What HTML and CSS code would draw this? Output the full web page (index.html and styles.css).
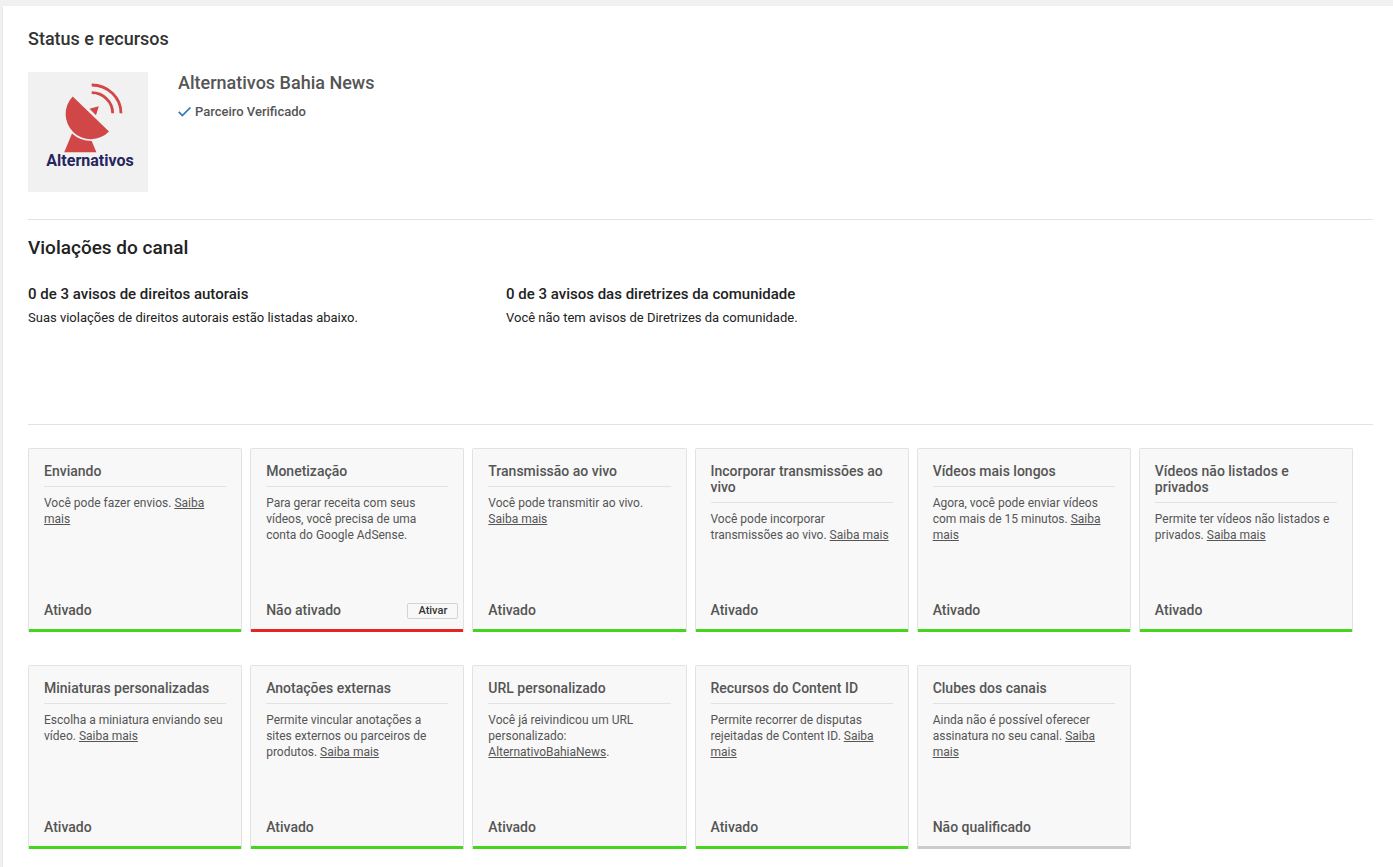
FILE: index.html
```html
<!DOCTYPE html>
<html lang="pt-BR">
<head>
<meta charset="utf-8">
<meta name="viewport" content="width=device-width, initial-scale=1">
<title>Status e recursos</title>
<link rel="stylesheet" href="styles.css">
</head>
<body>
<main class="panel">
  <h1 class="page-title">Status e recursos</h1>

  <section class="channel">
    <svg class="avatar" viewBox="0 0 120 120" role="img" aria-label="Logotipo Alternativos">
      <rect width="120" height="120" fill="#f1f1f1"/>
      <g fill="#d14646">
        <path d="M44.7 24.5 81 59.5A25.2 25.2 0 0 1 44.7 24.5Z"/>
        <path d="M61.5 36.7 70.8 34.2 68 43.2Z"/>
        <path d="M44 61.5Q52 69 63.7 69L68.4 80.3H36.2Z"/>
      </g>
      <g fill="none" stroke="#d14646" stroke-width="2.8">
        <path d="M63.7 13A29.3 28.3 0 0 1 93 41.3"/>
        <path d="M63.7 20.7A21 20.6 0 0 1 84.7 41.3"/>
      </g>
      <text class="avatar-text" x="62" y="94" text-anchor="middle">Alternativos</text>
    </svg>
    <div class="channel-info">
      <h2 class="channel-name">Alternativos Bahia News</h2>
      <p class="verified">
        <svg class="check" viewBox="0 0 13 10" aria-hidden="true"><path d="M.7 4.8 4.4 8.5 12.4 .5" fill="none" stroke="#2f78b9" stroke-width="1.7"/></svg>
        Parceiro Verificado
      </p>
    </div>
  </section>

  <section class="violations">
    <h2 class="section-title">Violações do canal</h2>
    <div class="strikes">
      <div class="strike">
        <h3 class="strike-title">0 de 3 avisos de direitos autorais</h3>
        <p class="strike-text">Suas violações de direitos autorais estão listadas abaixo.</p>
      </div>
      <div class="strike">
        <h3 class="strike-title">0 de 3 avisos das diretrizes da comunidade</h3>
        <p class="strike-text">Você não tem avisos de Diretrizes da comunidade.</p>
      </div>
    </div>
  </section>

  <section class="features">
    <article class="card">
      <h3 class="card-title">Enviando</h3>
      <p class="card-text">Você pode fazer envios. <a href="#">Saiba mais</a></p>
      <div class="card-status">Ativado</div>
    </article>
    <article class="card card-off">
      <h3 class="card-title">Monetização</h3>
      <p class="card-text">Para gerar receita com seus vídeos, você precisa de uma conta do Google AdSense.</p>
      <div class="card-status">Não ativado <button class="activate" type="button">Ativar</button></div>
    </article>
    <article class="card">
      <h3 class="card-title">Transmissão ao vivo</h3>
      <p class="card-text">Você pode transmitir ao vivo. <a href="#">Saiba mais</a></p>
      <div class="card-status">Ativado</div>
    </article>
    <article class="card">
      <h3 class="card-title">Incorporar transmissões ao vivo</h3>
      <p class="card-text">Você pode incorporar transmissões ao vivo. <a href="#">Saiba mais</a></p>
      <div class="card-status">Ativado</div>
    </article>
    <article class="card">
      <h3 class="card-title">Vídeos mais longos</h3>
      <p class="card-text">Agora, você pode enviar vídeos com mais de 15 minutos. <a href="#">Saiba mais</a></p>
      <div class="card-status">Ativado</div>
    </article>
    <article class="card">
      <h3 class="card-title">Vídeos não listados e privados</h3>
      <p class="card-text">Permite ter vídeos não listados e privados. <a href="#">Saiba mais</a></p>
      <div class="card-status">Ativado</div>
    </article>
    <article class="card">
      <h3 class="card-title">Miniaturas personalizadas</h3>
      <p class="card-text">Escolha a miniatura enviando seu vídeo. <a href="#">Saiba mais</a></p>
      <div class="card-status">Ativado</div>
    </article>
    <article class="card">
      <h3 class="card-title">Anotações externas</h3>
      <p class="card-text">Permite vincular anotações a sites externos ou parceiros de produtos. <a href="#">Saiba mais</a></p>
      <div class="card-status">Ativado</div>
    </article>
    <article class="card">
      <h3 class="card-title">URL personalizado</h3>
      <p class="card-text">Você já reivindicou um URL personalizado: <a href="#">AlternativoBahiaNews</a>.</p>
      <div class="card-status">Ativado</div>
    </article>
    <article class="card">
      <h3 class="card-title">Recursos do Content ID</h3>
      <p class="card-text">Permite recorrer de disputas rejeitadas de Content ID. <a href="#">Saiba mais</a></p>
      <div class="card-status">Ativado</div>
    </article>
    <article class="card card-na">
      <h3 class="card-title">Clubes dos canais</h3>
      <p class="card-text">Ainda não é possível oferecer assinatura no seu canal. <a href="#">Saiba mais</a></p>
      <div class="card-status">Não qualificado</div>
    </article>
  </section>
</main>
</body>
</html>
```
FILE: styles.css
```css
* {
  box-sizing: border-box;
}

body {
  margin: 0;
  padding: 6px 0 0 3px;
  background: #f1f1f1;
  color: #222;
  font-family: Roboto, "Liberation Sans", sans-serif;
  font-size: 13px;
}

h1, h2, h3, p {
  margin: 0;
  font-weight: 500;
}

.panel {
  min-height: calc(100vh - 6px);
  padding: 20px 20px 18px 25px;
  background: #fff;
  box-shadow: 0 1px 2px rgba(0, 0, 0, 0.1);
}

.page-title {
  font-size: 18px;
  line-height: 26px;
  color: #333;
}

.channel {
  display: flex;
  gap: 30px;
  padding: 20px 0 27px;
  border-bottom: 1px solid #e2e2e2;
}

.avatar {
  flex: none;
  width: 120px;
  height: 120px;
}

.avatar-text {
  font-size: 16px;
  font-weight: 700;
  fill: #25255f;
}

.channel-name {
  font-size: 18px;
  line-height: 22px;
  color: #555;
}

.verified {
  display: flex;
  align-items: center;
  gap: 4px;
  margin-top: 10px;
  line-height: 16px;
  color: #555;
}

.check {
  width: 13px;
  height: 10px;
}

.violations {
  min-height: 205px;
  padding-top: 15px;
  border-bottom: 1px solid #e2e2e2;
}

.section-title {
  font-size: 19px;
  line-height: 26px;
}

.strikes {
  display: flex;
  margin-top: 24px;
}

.strike {
  flex: 0 1 478px;
}

.strike-title {
  font-size: 15px;
  line-height: 18px;
}

.strike-text {
  margin-top: 7px;
  font-weight: 400;
  line-height: 16px;
}

.features {
  display: grid;
  grid-template-columns: repeat(6, 1fr);
  gap: 33px 8px;
  margin: 23px 20px 0 0;
}

.card {
  display: flex;
  flex-direction: column;
  min-height: 184px;
  padding: 14px 15px 13px;
  border: 1px solid #e2e2e2;
  border-bottom: 0;
  border-radius: 2px 2px 0 0;
  background: #f8f8f8;
  box-shadow: inset 0 -3px #45d51e;
  color: #555;
}

.card-off {
  box-shadow: inset 0 -3px #e52620;
}

.card-na {
  box-shadow: inset 0 -3px #ccc;
}

.card-title {
  padding-bottom: 7px;
  border-bottom: 1px solid #e2e2e2;
  font-size: 14px;
  line-height: 16px;
}

.card-text {
  margin-top: 8px;
  font-size: 12px;
  font-weight: 400;
  line-height: 16px;
}

.card-text a {
  color: inherit;
}

.card-status {
  display: flex;
  align-items: center;
  justify-content: space-between;
  margin: auto -10px 0 0;
  font-size: 14px;
  font-weight: 500;
  line-height: 18px;
}

.activate {
  height: 16px;
  margin-top: 2px;
  padding: 0 10px;
  border: 1px solid #d3d3d3;
  border-radius: 2px;
  background: #f8f8f8;
  color: #333;
  font-family: inherit;
  font-size: 11px;
  font-weight: 500;
  line-height: 14px;
}
```
